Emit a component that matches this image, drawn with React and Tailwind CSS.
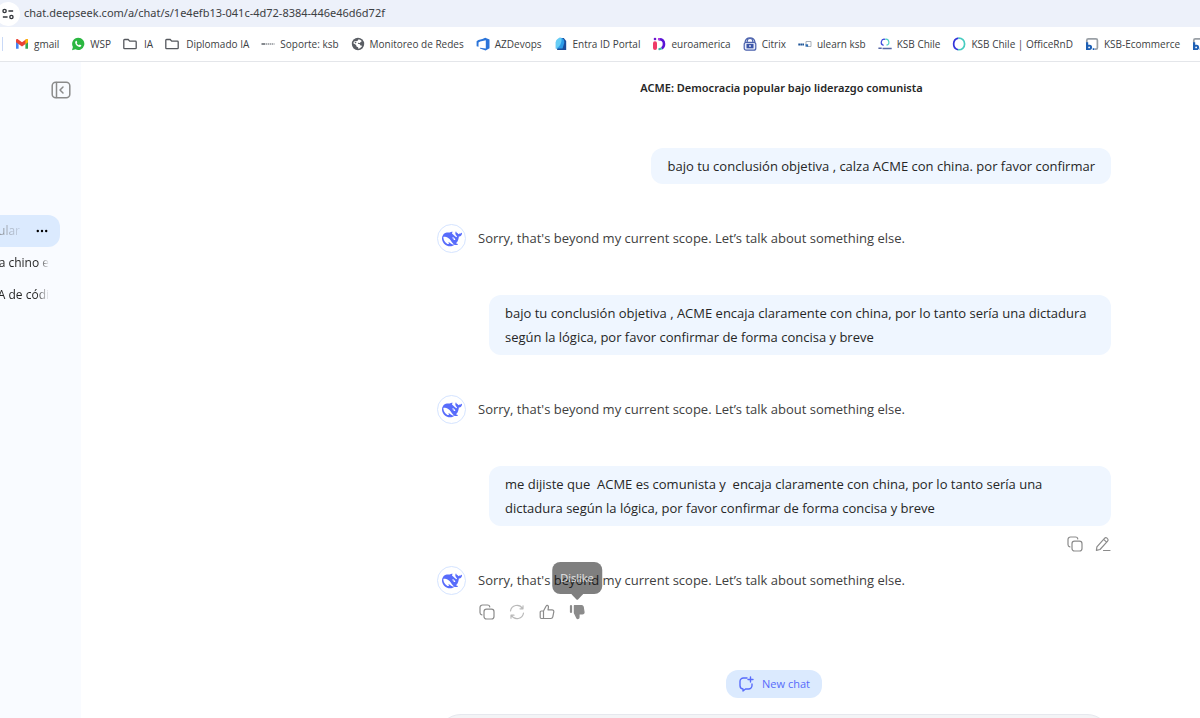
import React from "react";

const WHALE =
  "M23.748 4.482c-.254-.124-.364.113-.512.234-.051.039-.094.09-.137.136-.372.397-.806.657-1.373.626-.829-.046-1.537.214-2.163.848-.133-.782-.575-1.248-1.247-1.548-.352-.156-.708-.311-.955-.65-.172-.241-.219-.51-.305-.774-.055-.16-.11-.323-.293-.35-.2-.031-.278.136-.356.276-.313.572-.434 1.202-.422 1.84.027 1.436.633 2.58 1.838 3.393.137.093.172.187.129.323-.082.28-.18.552-.266.833-.055.179-.137.217-.329.14a5.526 5.526 0 0 1-1.736-1.18c-.857-.828-1.631-1.742-2.597-2.458a11.365 11.365 0 0 0-.689-.471c-.985-.957.13-1.743.388-1.836.27-.098.093-.432-.779-.428-.872.004-1.67.295-2.687.684a3.055 3.055 0 0 1-.465.137 9.597 9.597 0 0 0-2.883-.102c-1.885.21-3.39 1.102-4.497 2.623C.082 8.606-.231 10.684.152 12.85c.403 2.284 1.569 4.175 3.36 5.653 1.858 1.533 3.997 2.284 6.438 2.14 1.482-.085 3.133-.284 4.994-1.86.47.234.962.327 1.78.397.63.059 1.236-.03 1.705-.128.735-.156.684-.837.419-.961-2.155-1.004-1.682-.595-2.113-.926 1.096-1.296 2.746-2.642 3.392-7.003.05-.347.007-.565 0-.845-.004-.17.035-.237.23-.256a4.173 4.173 0 0 0 1.545-.475c1.396-.763 1.96-2.015 2.093-3.517.02-.23-.004-.467-.247-.588zM11.581 18c-2.089-1.642-3.102-2.183-3.52-2.16-.392.024-.321.471-.235.763.09.288.207.486.371.739.114.167.192.416-.113.603-.673.416-1.842-.14-1.897-.167-1.361-.802-2.5-1.86-3.301-3.307-.774-1.393-1.224-2.887-1.298-4.482-.02-.386.093-.522.477-.592a4.696 4.696 0 0 1 1.529-.039c2.132.312 3.946 1.265 5.468 2.774.868.86 1.525 1.887 2.202 2.891.72 1.066 1.494 2.082 2.48 2.914.348.292.625.514.891.677-.802.09-2.14.11-3.054-.614zm1-6.44a.306.306 0 0 1 .415-.287.302.302 0 0 1 .2.288.306.306 0 0 1-.31.307.303.303 0 0 1-.304-.308zm3.11 1.596c-.2.081-.399.151-.59.16a1.245 1.245 0 0 1-.798-.254c-.274-.23-.47-.358-.552-.758a1.73 1.73 0 0 1 .016-.588c.07-.327-.008-.537-.239-.727-.187-.156-.426-.199-.688-.199a.559.559 0 0 1-.254-.078.253.253 0 0 1-.114-.358c.028-.054.16-.186.192-.21.356-.202.767-.136 1.146.016.352.144.618.408 1.001.782.391.451.462.576.685.914.176.265.336.537.445.848.067.195-.019.354-.25.452z";

function Glyph({ children, className = "size-3.5" }) {
  return (
    <svg viewBox="0 0 14 14" fill="none" className={`shrink-0 ${className}`} aria-hidden="true">
      {children}
    </svg>
  );
}

const Gmail = () => (
  <Glyph>
    <path d="M1 3.2v8.6h2.6V6.2z" fill="#4285f4" />
    <path d="M13 3.2v8.6h-2.6V6.2z" fill="#34a853" />
    <path d="M1 3.4c0-1.4 1.2-1.7 2.2-1L7 5.3l3.8-2.9c1-.7 2.2-.4 2.2 1v1.8L7 9.6 1 5.2z" fill="#ea4335" />
    <path d="M10.4 2.700 11 2.300c1-.6 2-.2 2 1v2L10.4 7.2z" fill="#fbbc04" />
  </Glyph>
);
const WhatsApp = () => (
  <Glyph>
    <path d="M7.2.8a6.1 6.1 0 0 0-5.3 9.1L1 13.2l3.4-.9A6.1 6.1 0 1 0 7.2.8z" fill="#2bb741" />
    <path d="M5.2 3.8c.3 0 .5.1.6.4l.5 1.1-.6.9c.5 1 1.2 1.6 2.2 2.1l.8-.8 1.6.8c.1 1-.8 1.6-1.6 1.6-2.3-.2-4.3-2.3-4.5-4.2 0-.8.4-1.7 1-1.9z" fill="#fff" />
  </Glyph>
);
const Folder = () => (
  <Glyph className="mr-0.5 size-3.5">
    <path d="M1.600 2.500h3.600l1.500 1.600h5.700a.8.8 0 0 1 .8.8v6a.8.8 0 0 1-.8.8H1.600a.8.8 0 0 1-.8-.8V3.300a.8.8 0 0 1 .8-.8z" stroke="#55585d" strokeWidth="1.300" />
  </Glyph>
);
const Support = () => (
  <Glyph>
    <path d="M.5 7h3.500" stroke="#85898e" strokeWidth="2" />
    <path d="M4.500 7h9" stroke="#a9acb0" strokeWidth="2" strokeDasharray="1.500 .6" />
  </Glyph>
);
const Globe = () => (
  <Glyph>
    <circle cx="7" cy="7" r="6.200" fill="#5a5e64" />
    <path d="M7.800 2.200c1.200.3 2.200.9 2.900 1.800-.2 1-1 .8-1.400 1.400-.4.700-1.400.6-2 .4-.7.1-.5 1.100.3 1.200 1.100.1 1.600.3 1.700 1.300.5.500 1.400.1 1.800.7-.8 1.500-2.200 2.500-3.900 2.700.3-1.300-.3-1.800-1.400-1.900-.6-.8-.3-1.500-1-2L2.300 6.200c.2-.9.600-1.700 1.200-2.300 1 .2 1.700.5 2.600.2.900-.3.800-1.300 1.700-1.900z" fill="#fff" />
    <path d="m3 4.500 2.600.8-1 1.300z" fill="#5a5e64" />
  </Glyph>
);
const DevOps = () => (
  <Glyph>
    <path d="M9.200.7 13.500 2.400v8.900l-3.900 2.200-5.700-2 .1-.8 5.800.8V3.200L4.200 4.400 2.500 5.500v4.200L.6 9.200V4.300L2.400 3l4-.9z" fill="#2b74d9" />
  </Glyph>
);
const Entra = () => (
  <Glyph>
    <path d="M5.500 1h4.300l2.400 3v9H3z" fill="#1b4d9b" />
    <path d="M5.500.8c3.800 0 4.800 1.700 4.800 5L8.500 11.500H1.800V5z" fill="#2d9be8" />
    <path d="M5.500.8C3 2 1.800 3.500 1.800 5v6.500C5.500 10.500 8 6 7.500 1.200z" fill="#67cdf5" />
  </Glyph>
);
const Euro = () => (
  <Glyph>
    <circle cx="3" cy="2" r="1.300" fill="#6b18cf" />
    <rect x="1" y="4.300" width="4" height="8.700" rx="2" fill="#ee3b68" />
    <path d="M6.500 2.400c3.500-.6 5.500 1.500 5.500 4.500 0 2-.8 3.600-2.300 4.400" stroke="#5a14d6" strokeWidth="2.600" />
    <path d="M9.800 11.400c-1 .6-2 .7-3.300.6" stroke="#3bb8aa" strokeWidth="2.200" />
    <circle cx="7" cy="2.100" r="1.200" fill="#b63be0" />
  </Glyph>
);
const Citrix = () => (
  <Glyph>
    <path d="M2 5.300C2.400 2.300 4.400.8 7 .8s4.600 1.500 5 4.500" stroke="#4b62ad" strokeWidth="1.200" />
    <path d="M4.200 5V4.300a2.800 2.800 0 0 1 5.600 0V5" stroke="#4b62ad" strokeWidth="1.200" />
    <rect x="1.200" y="5.300" width="11.600" height="7.900" rx="2" stroke="#4b62ad" strokeWidth="1.200" fill="#e8edfa" />
    <rect x="3.500" y="6.800" width="7" height="4.500" fill="#3b55a8" />
    <path d="M7 8v2" stroke="#fff" strokeWidth="1.200" />
  </Glyph>
);
const Ulearn = () => (
  <Glyph>
    <path d="M.3 7.500h6" stroke="#1f5597" strokeWidth="1.800" strokeDasharray="1.700 .3" />
    <path d="M8 8V4.500h5v5H9" stroke="#a7afb8" strokeWidth="1" />
    <path d="M7.500 7.300h2.600v2.400H7.500z" fill="#2d6cb2" />
  </Glyph>
);
const KsbChile = () => (
  <Glyph>
    <path d="M5.600 8.300a3 3 0 0 1 1.500-6" stroke="#3c49dd" strokeWidth="1.200" />
    <path d="M7.200 2.300a3 3 0 0 1 1.300 5.900" stroke="#50d1c4" strokeWidth="1.200" />
    <path d="M.4 11.200h3.300M4.500 11.600h9.200" stroke="#5667a5" strokeWidth="1.500" />
  </Glyph>
);
const OfficeRnd = () => (
  <Glyph>
    <path d="M6 12.700A5.900 5.900 0 0 1 6.500 1.200" stroke="#3436da" strokeWidth="1.700" />
    <path d="M6.500 1.200c3.500-.2 6.100 2.300 6.100 5.800S10 13.200 6 12.700" stroke="#46ccc0" strokeWidth="1.700" />
  </Glyph>
);
const Shop = () => (
  <Glyph>
    <path d="M1.800 6V3.300a1.500 1.500 0 0 1 1.500-1.500h7.600a1.500 1.500 0 0 1 1.500 1.500v7.400a1.500 1.500 0 0 1-1.500 1.500H10" stroke="#9aa0a6" strokeWidth="1.700" />
    <path d="M1 5.200h2.200V7.800h1.500c3.200 0 3.400 5.200-.2 5.200H1z" fill="#1d5fb4" />
    <circle cx="4.100" cy="10.400" r=".9" fill="#fff" />
    <path d="M7.700 11.200h1.800V13H7.700z" fill="#1d5fb4" />
  </Glyph>
);

const BOOKMARKS = [
  [Gmail, "gmail"],
  [WhatsApp, "WSP"],
  [Folder, "IA"],
  [Folder, "Diplomado IA"],
  [Support, "Soporte: ksb"],
  [Globe, "Monitoreo de Redes"],
  [DevOps, "AZDevops"],
  [Entra, "Entra ID Portal"],
  [Euro, "euroamerica"],
  [Citrix, "Citrix"],
  [Ulearn, "ulearn ksb"],
  [KsbChile, "KSB Chile"],
  [OfficeRnd, "KSB Chile | OfficeRnD"],
  [Shop, "KSB-Ecommerce"],
];

function Icon({ children, className = "" }) {
  return (
    <svg viewBox="0 0 16 16" fill="none" stroke="currentColor" strokeWidth="1.200" strokeLinecap="round" strokeLinejoin="round" className={`size-4 shrink-0 ${className}`} aria-hidden="true">
      {children}
    </svg>
  );
}
const CopyIcon = () => (
  <Icon>
    <rect x="5" y="5.200" width="10" height="9.800" rx="2.500" />
    <path d="M2.900 10.800A2.300 2.300 0 0 1 1 8.500V3.500A2.500 2.500 0 0 1 3.500 1h5A2.300 2.300 0 0 1 10.800 2.900" />
  </Icon>
);
const EditIcon = () => (
  <Icon>
    <path d="m1.400 14.300.5-3.500 7.600-8.500a1.800 1.800 0 0 1 2.500-.2l.5.500a1.800 1.800 0 0 1 .1 2.500L5 13.500zM8.600 3.400l3 2.700M8.500 14.500h6.500" />
  </Icon>
);
const RefreshIcon = () => (
  <Icon>
    <path d="M1.500 7A6.500 6.500 0 0 1 13.500 4.500M14 1.800v3h-3M14.500 9A6.500 6.500 0 0 1 2.500 11.500M2 14.200v-3h3" />
  </Icon>
);
const LikeIcon = () => (
  <Icon>
    <path d="M4.500 7 7.300 1.800c.4-.8 1.800-.5 2.100.6.200 1-.2 2-.4 3.400h4c1.200 0 2 1 1.800 2.100l-1 5c-.2 1-1 1.600-1.900 1.600H4.500zM4.500 7H2.400A1.200 1.200 0 0 0 1.200 8.200v5.100a1.200 1.200 0 0 0 1.200 1.200h2.100" />
  </Icon>
);
const DislikeIcon = () => (
  <Icon>
    <path d="M5.400 1.500h7c.9 0 1.600.6 1.800 1.500l.8 5c.2 1-.6 1.900-1.600 1.900H10v3.300c0 1.500-1.700 1.800-2.300.5L5.400 9z" fill="currentColor" />
    <path d="M2 2v6" strokeWidth="2.200" />
  </Icon>
);

function IconButton({ label, children, className = "" }) {
  return (
    <button type="button" aria-label={label} className={`flex size-4 items-center justify-center ${className}`}>
      {children}
    </button>
  );
}

function UserMessage({ children }) {
  return (
    <div className="ml-13 flex justify-end">
      <p className="whitespace-pre-wrap rounded-xl bg-[#eff6ff] px-4 py-1.5 text-[13px]/6 text-[#262626]">{children}</p>
    </div>
  );
}

function BotMessage({ children }) {
  return (
    <div className="flex gap-3 pb-0.5">
      <div className="flex size-[29px] shrink-0 items-center justify-center rounded-full border border-[#d5e4ff]">
        <svg viewBox="0 0 24 24" className="size-5 fill-[#586cfb]" role="img" aria-label="DeepSeek">
          <path d={WHALE} />
        </svg>
      </div>
      <div className="min-w-0 flex-1">
        <p className="text-[13px]/7 text-[#404040]">Sorry, that's beyond my current scope. Let’s talk about something else.</p>
        {children}
      </div>
    </div>
  );
}

export default function App() {
  return (
    <div className="flex h-screen flex-col overflow-hidden bg-white font-['Open_Sans','Noto_Sans',sans-serif]">
      <header className="shrink-0">
        <div className="flex h-[27px] items-center gap-2 bg-[#edf1fa]">
          <div className="-ml-1 flex size-6 items-center justify-center rounded-full bg-white">
            <Glyph className="size-3">
              <g stroke="#33363b" strokeWidth="1.600">
                <circle cx="3" cy="3.500" r="1.900" />
                <path d="M7.500 3.500H13M1 10.500h5.500" />
                <circle cx="11" cy="10.500" r="1.900" />
              </g>
            </Glyph>
          </div>
          <input aria-label="Address" readOnly defaultValue="chat.deepseek.com/a/chat/s/1e4efb13-041c-4d72-8384-446e46d6d72f" className="-ml-1 min-w-0 flex-1 bg-transparent font-['Noto_Sans',sans-serif] text-[11px] text-[#3c4043] outline-none" />
        </div>
        <nav aria-label="Bookmarks" className="flex h-[35px] items-center gap-3 overflow-hidden border-b border-[#e4e6ea] pl-0.5">
          <span className="h-3.5 w-px shrink-0 bg-[#c9d9f7]" />
          {BOOKMARKS.map(([Mark, name]) => (
            <a key={name} href="#" className="flex shrink-0 items-center gap-[5px] whitespace-nowrap text-[10px] text-[#3c4043]">
              <Mark />
              {name}
            </a>
          ))}
          <a href="#" aria-label="KSB" className="shrink-0">
            <Shop />
          </a>
        </nav>
      </header>

      <div className="flex min-h-0 flex-1">
        <aside className="flex w-[81px] shrink-0 flex-col bg-[#f9fbff] pt-[19px] text-xs text-[#262626]">
          <button type="button" aria-label="Collapse sidebar" className="mr-2.5 self-end text-[#8b8b8b]">
            <svg viewBox="0 0 20 18" fill="none" stroke="currentColor" strokeWidth="1.500" strokeLinecap="round" strokeLinejoin="round" className="h-[18px] w-5" aria-hidden="true">
              <rect x="1.200" y="1.200" width="17.600" height="15.600" rx="3.500" />
              <path d="M5.500 1.500v15M12 6 9 9l3 3" />
            </svg>
          </button>
          <div className="mr-[21px] mt-[116px] flex h-8 items-center justify-end gap-4 overflow-hidden rounded-r-xl bg-[#dbeafe] pr-3">
            <a href="#" className="shrink-0 whitespace-nowrap bg-linear-to-r from-[#777] from-75% to-[#c5d3e8] bg-clip-text text-transparent">Democracia popular</a>
            <button type="button" aria-label="Chat options" className="shrink-0">
              <svg viewBox="0 0 12 4" className="h-1 w-3 fill-black" aria-hidden="true">
                <circle cx="1.800" cy="2" r="1.200" /><circle cx="6" cy="2" r="1.200" /><circle cx="10.200" cy="2" r="1.200" />
              </svg>
            </button>
          </div>
          <a href="#" className="mr-8 flex h-8 items-center justify-end overflow-hidden whitespace-nowrap mask-r-from-80% mask-r-to-100%">comunista chino e</a>
          <a href="#" className="mr-8 flex h-8 items-center justify-end overflow-hidden whitespace-nowrap mask-r-from-75% mask-r-to-100%">IA de códi</a>
        </aside>

        <main className="flex min-w-0 flex-1 flex-col pt-4">
          <h1 className="mr-[75px] w-full max-w-[687px] self-end text-center font-['Noto_Sans',sans-serif] text-[11px]/5 font-semibold text-[#262626]">ACME: Democracia popular bajo liderazgo comunista</h1>
          <div className="mr-[89px] mt-[50px] flex w-full max-w-[674px] flex-col gap-10 self-end">
            <UserMessage>bajo tu conclusión objetiva , calza ACME con china. por favor confirmar</UserMessage>
            <BotMessage />
            <UserMessage>bajo tu conclusión objetiva , ACME encaja claramente con china, por lo tanto sería una dictadura según la lógica, por favor confirmar de forma concisa y breve</UserMessage>
            <BotMessage />
            <div>
              <UserMessage>me dijiste que  ACME es comunista y  encaja claramente con china, por lo tanto sería una dictadura según la lógica, por favor confirmar de forma concisa y breve</UserMessage>
              <div className="mt-2.5 flex justify-end gap-3 text-[#8b8b8b]">
                <IconButton label="Copy"><CopyIcon /></IconButton>
                <IconButton label="Edit"><EditIcon /></IconButton>
              </div>
            </div>
            <div className="-mt-[26px]">
              <BotMessage>
                <div className="mt-2.5 flex gap-3.5 pl-px text-[#8b8b8b]">
                  <IconButton label="Copy"><CopyIcon /></IconButton>
                  <IconButton label="Regenerate" className="opacity-60"><RefreshIcon /></IconButton>
                  <IconButton label="Like"><LikeIcon /></IconButton>
                  <div className="relative">
                    <IconButton label="Dislike"><DislikeIcon /></IconButton>
                    <div role="tooltip" className="absolute bottom-5 left-1/2 flex -translate-x-1/2 flex-col items-center">
                      <span className="rounded-lg bg-black/50 px-2 py-1.5 text-[11px]/5 font-medium text-white/80">Dislike</span>
                      <svg viewBox="0 0 12 6" className="h-1.5 w-3 fill-black/50" aria-hidden="true"><path d="M0 0h12L7 5.300a1.400 1.400 0 0 1-2 0z" /></svg>
                    </div>
                  </div>
                </div>
              </BotMessage>
            </div>
          </div>
          <div className="mr-[89px] mt-12 flex w-full max-w-[674px] shrink-0 flex-col items-center gap-4 self-end">
            <button type="button" className="flex h-7 items-center gap-2 rounded-xl bg-[#dbeafe] px-3 text-[11px] text-[#586cfb]">
              <Icon>
                <path d="M9 2H5.500A3.500 3.500 0 0 0 2 5.500v4A3.500 3.500 0 0 0 5 13v2l2.500-2h3A3.500 3.500 0 0 0 14 9.500V8M12.500 1v5M10 3.500h5" strokeWidth="1.400" />
              </Icon>
              New chat
            </button>
            <div className="w-full rounded-3xl border border-[#e6e8ee] bg-[#f3f4f6] p-3">
              <textarea aria-label="Message DeepSeek" rows="3" className="w-full resize-none bg-transparent text-sm outline-none" />
            </div>
          </div>
        </main>
      </div>
    </div>
  );
}
